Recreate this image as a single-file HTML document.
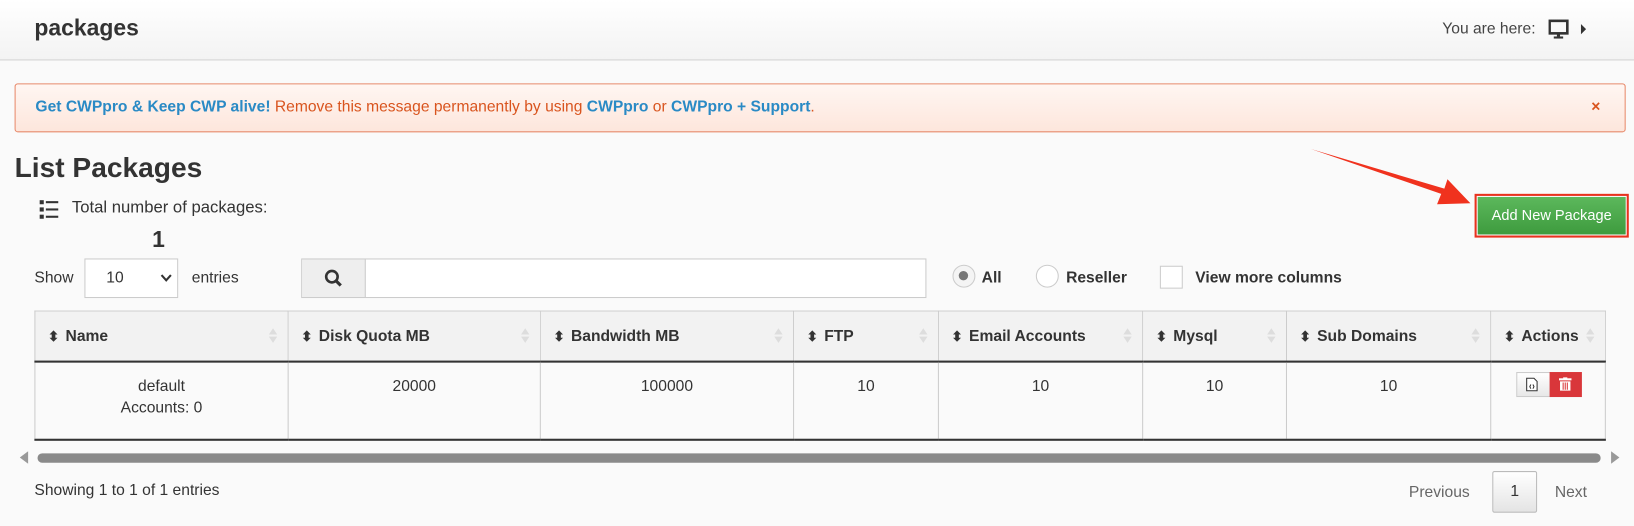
<!DOCTYPE html>
<html><head><meta charset="utf-8"><style>
body{margin:0;width:1634px;height:526px;background:#fafafa;font-family:"Liberation Sans",sans-serif;color:#333;position:relative;overflow:hidden}
#w{position:absolute;left:0;top:0;width:1568px;height:505px;transform:scale(1.0421);transform-origin:0 0}
.a{position:absolute}
.hdr{left:0;top:0;width:1568px;height:57px;background:linear-gradient(#fff,#f3f3f3);border-bottom:1px solid #d2d2d2}
table{border-collapse:collapse;position:absolute;left:33px;top:298px;width:1508px;font-size:15px}
th{height:47px;background:#f2f2f2;border:1px solid #ccc;border-bottom:2px solid #333;text-align:left;padding:0 0 0 12px;font-weight:bold;color:#333;position:relative}
th:after{content:"";position:absolute;right:10px;top:16px;width:0;height:0;border-left:4px solid transparent;border-right:4px solid transparent;border-bottom:6px solid #ddd}
th:before{content:"";position:absolute;right:10px;top:24px;width:0;height:0;border-left:4px solid transparent;border-right:4px solid transparent;border-top:6px solid #ddd}
th .s{font-size:13px;margin-right:6px}
td{height:75px;border:1px solid #ccc;border-bottom:2px solid #333;text-align:center;vertical-align:top;padding-top:12px;box-sizing:border-box;font-size:15px;line-height:21px}
</style></head><body><div id="w">
<div class="a hdr"></div>
<div class="a" style="left:33px;top:14px;font-size:22px;font-weight:bold;color:#333">packages</div>
<div class="a" style="left:1384px;top:19px;font-size:15px;color:#444">You are here:</div>
<svg class="a" style="left:1486px;top:18px" width="20" height="20" viewBox="0 0 20 20"><rect x="1" y="2" width="17" height="12" fill="none" stroke="#333" stroke-width="2.5"/><rect x="8" y="14" width="3" height="3" fill="#333"/><rect x="5" y="17" width="9" height="2" fill="#333"/></svg>
<svg class="a" style="left:1517px;top:23px" width="6" height="10"><path d="M0 0L5 5L0 10Z" fill="#333"/></svg>
<div class="a" style="left:14px;top:80px;width:1544px;height:45px;border:1px solid #e8896a;border-radius:3px;background:linear-gradient(#fff6f2,#fde6dc)"></div>
<div class="a" style="left:34px;top:94px;font-size:15px;color:#d9541e"><b style="color:#2a8ac5">Get CWPpro &amp; Keep CWP alive!</b> Remove this message permanently by using <b style="color:#2a8ac5">CWPpro</b> or <b style="color:#2a8ac5">CWPpro + Support</b>.</div>
<div class="a" style="left:1527px;top:94px;font-size:15px;font-weight:bold;color:#d9541e">×</div>
<div class="a" style="left:14px;top:146px;font-size:27px;font-weight:bold;color:#333">List Packages</div>
<svg class="a" style="left:38px;top:192px" width="18" height="18"><rect x="0" y="0" width="4" height="4" fill="#333"/><rect x="0" y="7" width="4" height="4" fill="#333"/><rect x="0" y="14" width="4" height="4" fill="#333"/><rect x="6" y="1" width="12" height="2" fill="#333"/><rect x="6" y="8" width="12" height="2" fill="#333"/><rect x="6" y="15" width="12" height="2" fill="#333"/></svg>
<div class="a" style="left:69px;top:191px;font-size:16px;color:#333">Total number of packages:</div>
<div class="a" style="left:146px;top:217px;font-size:22px;font-weight:bold;color:#333">1</div>
<div class="a" style="left:33px;top:258px;font-size:15px">Show</div>
<div class="a" style="left:81px;top:248px;width:90px;height:38px;border:1px solid #ccc;background:#fff;box-sizing:border-box"></div>
<div class="a" style="left:102px;top:258px;font-size:15px">10</div>
<svg class="a" style="left:154px;top:263px" width="11" height="8"><path d="M1 1L5.5 6L10 1" fill="none" stroke="#333" stroke-width="2"/></svg>
<div class="a" style="left:184px;top:258px;font-size:15px">entries</div>
<div class="a" style="left:289px;top:248px;width:600px;height:38px;border:1px solid #ccc;background:#fff;box-sizing:border-box"></div>
<div class="a" style="left:290px;top:249px;width:60px;height:36px;background:#eee;border-right:1px solid #ccc"></div>
<svg class="a" style="left:311px;top:258px" width="18" height="18"><circle cx="7.5" cy="7.5" r="5.5" fill="none" stroke="#333" stroke-width="2.5"/><path d="M11.5 11.5L16 16" stroke="#333" stroke-width="3"/></svg>
<div class="a" style="left:914px;top:254px;width:20px;height:20px;border:1px solid #ccc;border-radius:50%;background:#f4f4f4"></div>
<div class="a" style="left:920px;top:260px;width:9px;height:9px;border-radius:50%;background:#777"></div>
<div class="a" style="left:942px;top:258px;font-size:15px;font-weight:bold">All</div>
<div class="a" style="left:994px;top:254px;width:20px;height:20px;border:1px solid #ccc;border-radius:50%;background:#fff"></div>
<div class="a" style="left:1023px;top:258px;font-size:15px;font-weight:bold">Reseller</div>
<div class="a" style="left:1113px;top:255px;width:20px;height:20px;border:1px solid #ccc;background:#fff"></div>
<div class="a" style="left:1147px;top:258px;font-size:15px;font-weight:bold">View more columns</div>
<svg class="a" style="left:1255px;top:140px" width="160" height="62"><path d="M3 3L128 46L124 56L156 55L134 32L131 41Z" fill="#f0321e"/></svg>
<div class="a" style="left:1415px;top:186px;width:148px;height:42px;border:2px solid #e8321e;box-sizing:border-box"></div>
<div class="a" style="left:1418px;top:189px;width:142px;height:36px;background:linear-gradient(#5cb85c,#3e9b3e);color:#fff;font-size:14px;text-align:center;line-height:35px">Add New Package</div>
<table><tr>
<th style="width:230px"><span class="s">⬍</span>Name</th><th style="width:229px"><span class="s">⬍</span>Disk Quota MB</th><th style="width:230px"><span class="s">⬍</span>Bandwidth MB</th><th style="width:126px"><span class="s">⬍</span>FTP</th><th style="width:183px"><span class="s">⬍</span>Email Accounts</th><th style="width:125px"><span class="s">⬍</span>Mysql</th><th style="width:183px"><span class="s">⬍</span>Sub Domains</th><th><span class="s">⬍</span>Actions</th>
</tr><tr><td>default<br>Accounts: 0</td><td>20000</td><td>100000</td><td>10</td><td>10</td><td>10</td><td>10</td><td></td></tr></table>
<div class="a" style="left:1455px;top:357px;width:33px;height:24px;border:1px solid #ccc;background:linear-gradient(#fff,#e8e8e8);box-sizing:border-box"></div>
<svg class="a" style="left:1464px;top:362px" width="12" height="14"><path d="M1 1H8L11 4V13H1Z" fill="#fff" stroke="#333"/><path d="M5 7L4 9L5 11M7 7L8 9L7 11" stroke="#333" fill="none"/></svg>
<div class="a" style="left:1487px;top:357px;width:31px;height:24px;background:#d9363a"></div>
<svg class="a" style="left:1496px;top:362px" width="12" height="13"><rect x="0" y="1" width="12" height="2" fill="#fff"/><rect x="4" y="0" width="4" height="2" fill="#fff"/><path d="M1 4H11V13H1Z" fill="#fff"/><path d="M4 5V12M6 5V12M8 5V12" stroke="#d9363a"/></svg>
<svg class="a" style="left:18px;top:433px" width="10" height="12"><path d="M9 0L1 6L9 12Z" fill="#999"/></svg>
<div class="a" style="left:36px;top:435px;width:1500px;height:9px;border-radius:5px;background:#8a8a8a"></div>
<svg class="a" style="left:1545px;top:433px" width="10" height="12"><path d="M1 0L9 6L1 12Z" fill="#999"/></svg>
<div class="a" style="left:33px;top:462px;font-size:15px">Showing 1 to 1 of 1 entries</div>
<div class="a" style="left:1352px;top:464px;font-size:15px;color:#666">Previous</div>
<div class="a" style="left:1432px;top:452px;width:43px;height:40px;border:1px solid #bbb;border-radius:2px;background:linear-gradient(#fff,#e4e4e4);box-sizing:border-box;text-align:center;line-height:38px;font-size:15px">1</div>
<div class="a" style="left:1492px;top:464px;font-size:15px;color:#666">Next</div>
</div></body></html>
